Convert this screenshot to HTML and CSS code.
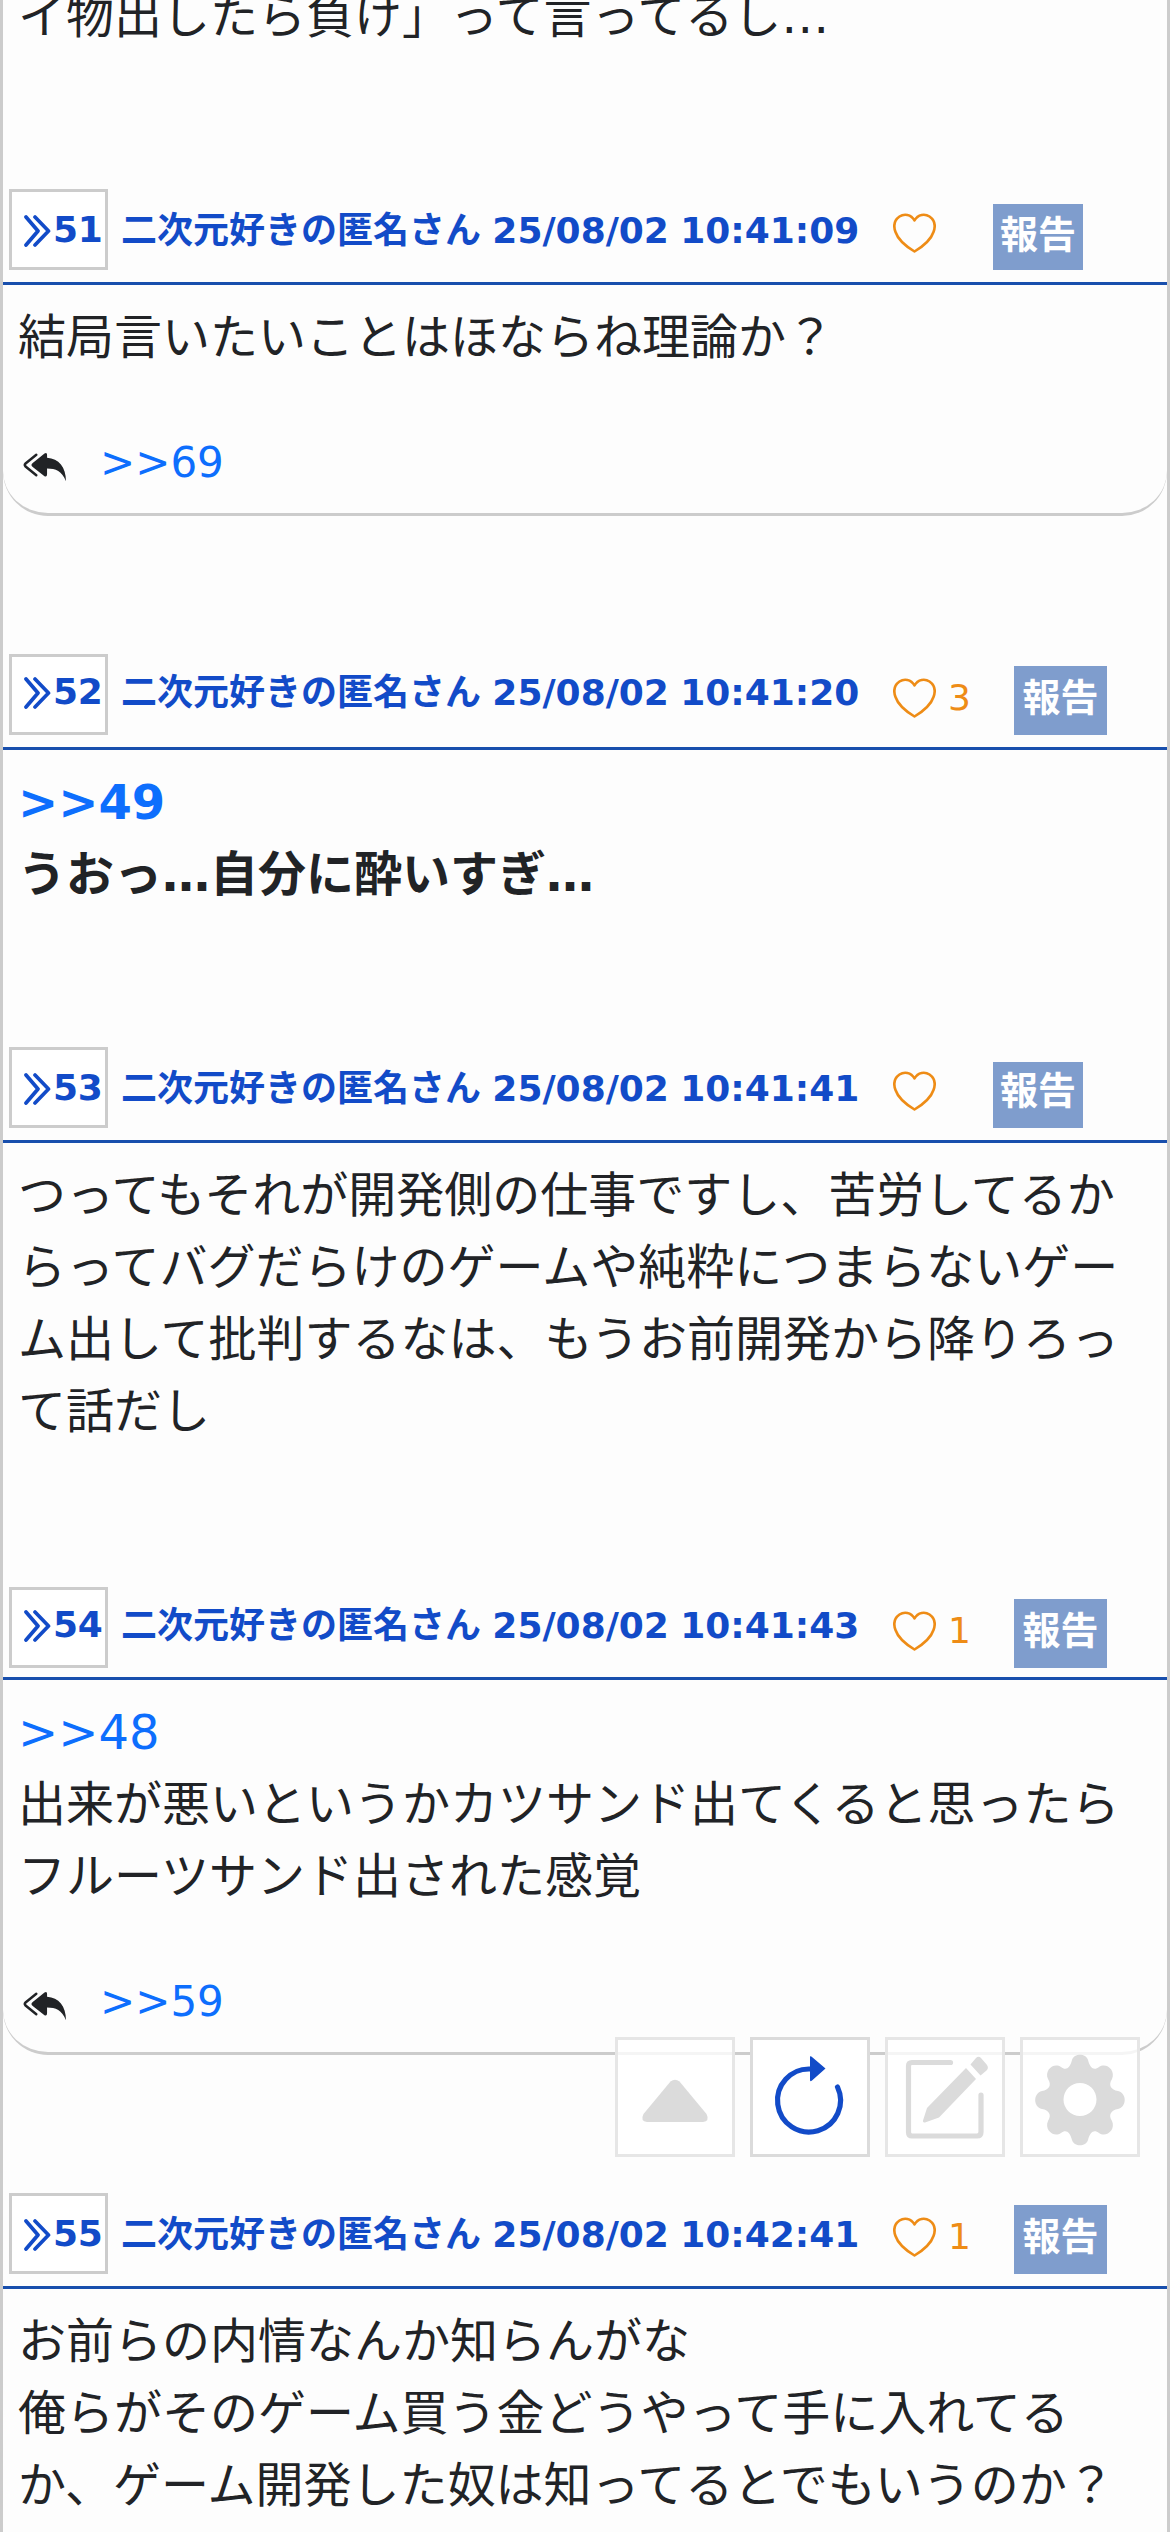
FILE: index.html
```html
<!DOCTYPE html>
<html lang="ja">
<head>
<meta charset="utf-8">
<title>掲示板</title>
<link rel="stylesheet" href="styles.css">
</head>
<body>
<svg class="defs" aria-hidden="true">
  <symbol id="quote" viewBox="0 0 27 32"><path d="M2 2 14 16 2 30M11 2 24.500 16 11 30" fill="none" stroke="currentColor" stroke-width="3.7" stroke-linecap="round" stroke-linejoin="round"/></symbol>
  <symbol id="heart" viewBox="0 0 43 40"><path d="M21.500 7.500C18 1 11 .5 6.500 3.500C1.500 7 .3 13 2.500 19C5 26.500 14 34 21.500 38.500C29 34 38 26.500 40.500 19C42.700 13 41.500 7 36.500 3.500C32 .5 25 1 21.500 7.500Z" fill="none" stroke="currentColor" stroke-width="2.6" stroke-linejoin="round"/></symbol>
  <symbol id="reply" viewBox="0 0 42 25"><path d="M13 2 2.500 10.500Q1 12 2.500 13.500L13 22" fill="none" stroke="currentColor" stroke-width="2.4" stroke-linecap="round"/><path d="M21 .8Q23.500-.5 23.500 2V5C35 6 42 14 42 28C38 18 32 15.500 23.500 15.500V21Q23.500 24 21 23L9.500 14Q7 12 9.500 10Z" fill="currentColor"/></symbol>
</svg>
<main class="thread">
  <article class="post p50"><div class="body"><p>イ物出したら負け」って言ってるし…</p></div></article>
  <article class="post p51">
    <header class="head"><a class="num"><svg><use href="#quote"/></svg>51</a><span class="meta">二次元好きの匿名さん 25/08/02 10:41:09</span><span class="like"><svg><use href="#heart"/></svg></span><button class="report small">報告</button></header>
    <div class="body"><p>結局言いたいことはほならね理論か？</p></div>
    <footer class="replies"><svg><use href="#reply"/></svg><a>&gt;&gt;69</a></footer>
  </article>
  <article class="post p52">
    <header class="head raised"><a class="num"><svg><use href="#quote"/></svg>52</a><span class="meta">二次元好きの匿名さん 25/08/02 10:41:20</span><span class="like"><svg><use href="#heart"/></svg>3</span><button class="report">報告</button></header>
    <div class="body strong"><p><a>&gt;&gt;49</a><br>うおっ…自分に酔いすぎ…</p></div>
  </article>
  <article class="post p53">
    <header class="head"><a class="num"><svg><use href="#quote"/></svg>53</a><span class="meta">二次元好きの匿名さん 25/08/02 10:41:41</span><span class="like"><svg><use href="#heart"/></svg></span><button class="report small">報告</button></header>
    <div class="body"><p>つってもそれが開発側の仕事ですし、苦労してるか<br>らってバグだらけのゲームや純粋につまらないゲー<br>ム出して批判するなは、もうお前開発から降りろっ<br>て話だし</p></div>
  </article>
  <article class="post p54">
    <header class="head raised short"><a class="num"><svg><use href="#quote"/></svg>54</a><span class="meta">二次元好きの匿名さん 25/08/02 10:41:43</span><span class="like"><svg><use href="#heart"/></svg>1</span><button class="report">報告</button></header>
    <div class="body"><p><a>&gt;&gt;48</a><br>出来が悪いというかカツサンド出てくると思ったら<br>フルーツサンド出された感覚</p></div>
    <footer class="replies"><svg><use href="#reply"/></svg><a>&gt;&gt;59</a></footer>
  </article>
  <article class="post p55">
    <header class="head"><a class="num"><svg><use href="#quote"/></svg>55</a><span class="meta">二次元好きの匿名さん 25/08/02 10:42:41</span><span class="like"><svg><use href="#heart"/></svg>1</span><button class="report">報告</button></header>
    <div class="body"><p>お前らの内情なんか知らんがな<br>俺らがそのゲーム買う金どうやって手に入れてる<br>か、ゲーム開発した奴は知ってるとでもいうのか？</p></div>
  </article>
</main>
<nav class="tools">
  <button class="tool"><svg viewBox="0 0 120 120"><path d="M55.500 44.500Q60 41 64.500 44.500L91.500 77Q95 84 88 85H32Q25 84 28.500 77Z" fill="#dbdbdb"/></svg></button>
  <button class="tool active"><svg viewBox="0 0 120 120"><path d="M60 32A31.500 31.500 0 1 0 87.500 50" fill="none" stroke="#124bc8" stroke-width="5.200" stroke-linecap="round"/><path d="M60 19.500Q61 19 62 20L75.500 31.500 62 43.500Q60 45 60 43Z" fill="#124bc8"/></svg></button>
  <button class="tool"><svg viewBox="0 0 120 120"><path d="M65.500 25.500H27Q23.500 25.500 23.500 29V95Q23.500 99 27 99H92Q96 99 96 95V58" fill="none" stroke="#dbdbdb" stroke-width="5.200" stroke-linecap="round"/><path d="M81 31 91 42 54 80.500 40 85.500Q37.500 86 38 83.500L42 71ZM91 21Q93.500 18.500 96 21L102 28Q104 31 101.500 33.500L95.500 38.500 85.500 27.500Z" fill="#dbdbdb"/></svg></button>
  <button class="tool"><svg viewBox="0 0 120 120"><path fill="#dbdbdb" fill-rule="evenodd" d="M52 23C54 16 66 16 68 23C70 31 74 34 79 30C86 25 96 33 92 42C88 48 91 53 98 54C107 56 107 70 98 72C91 73 88 78 92 84C96 93 86 101 79 96C74 92 70 95 68 103C66 110 54 110 52 103C50 95 46 92 41 96C34 101 24 93 28 84C32 78 29 73 22 72C13 70 13 56 22 54C29 53 32 48 28 42C24 33 34 25 41 30C46 34 50 31 52 23ZM60 46A16.500 16.500 0 1 0 60 79A16.500 16.500 0 1 0 60 46Z"/></svg></button>
</nav>
</body>
</html>
```
FILE: styles.css
```css
* { box-sizing: border-box; }
html { height: 2532px; overflow: hidden; }
body { margin: 0; height: 2532px; overflow: hidden; position: relative; background: #fdfdfd; color: #212326; font: 48px/72px "DejaVu Sans", "Noto Sans CJK JP", sans-serif; }
.defs { display: none; }
.thread { height: 2532px; overflow: hidden; border: solid #ccc; border-width: 0 3px; }
p { margin: 0; white-space: nowrap; }
a { color: #0d6efd; text-decoration: none; }
.post { display: flex; flex-direction: column; }
.body { padding: 16px 15px 0; }
.strong { font-weight: 700; }
.p50 { height: 189px; }
.p50 .body { padding-top: 0; margin-top: -20px; }
.p51 { height: 327px; margin-bottom: 138px; }
.p52 { height: 393px; }
.p53 { height: 540px; }
.p54 { height: 468px; margin-bottom: 138px; }
.p51, .p54 { border-bottom: 3px solid #ccc; border-radius: 0 0 45px 45px; }
.head { flex: none; height: 96px; border-bottom: 3px solid #184fad; padding-left: 6px; display: flex; align-items: flex-start; color: #124bc8; font-size: 36px; font-weight: 700; }
.head.short { height: 93px; }
.num { flex: none; width: 99px; height: 81px; border: 3px solid #ccc; background: #fff; color: #124bc8; display: flex; align-items: center; padding-left: 12px; letter-spacing: -.3px; }
.num svg { width: 27px; height: 32px; margin: 2px 2px 0 0; flex: none; }
.meta { width: 772px; margin: 6px 0 0 13px; white-space: nowrap; word-spacing: -1.2px; }
.raised .num { padding-bottom: 6px; }
.raised .meta { margin-top: 3px; }
.like { width: 103px; height: 40px; margin-top: 24px; display: flex; align-items: center; gap: 12px; font-weight: 400; color: #ee8c16; line-height: 40px; }
.like svg { width: 43px; height: 40px; flex: none; }
.report { flex: none; margin: 12px 0 0 18px; width: 93px; height: 69px; padding: 0 0 11px; border: 0; background: #7f9dcd; color: #fff; font: 700 38px/58px "Noto Sans CJK JP", sans-serif; }
.report.small { width: 90px; height: 66px; margin: 15px 0 0 -3px; padding-bottom: 10px; line-height: 56px; }
.p53 .report { padding-bottom: 14px; line-height: 52px; }
.replies { display: flex; align-items: center; height: 72px; margin: 54px 0 0 20px; }
.replies svg { width: 43px; height: 29px; margin: 5px 34px 0 0; overflow: visible; }
.replies symbol { overflow: visible; }
#reply { overflow: visible; }
.replies a { font-size: 42px; }
.tools { position: absolute; left: 615px; top: 2037px; display: flex; gap: 15px; }
.tool { width: 120px; height: 120px; padding: 0; border: 3px solid #e6e6e6; background: rgba(255,255,255,.8); }
.tool.active { background: #fff; border-color: #dbdbdb; }
.tool svg { display: block; width: 120px; height: 120px; margin: -3px; }
```
